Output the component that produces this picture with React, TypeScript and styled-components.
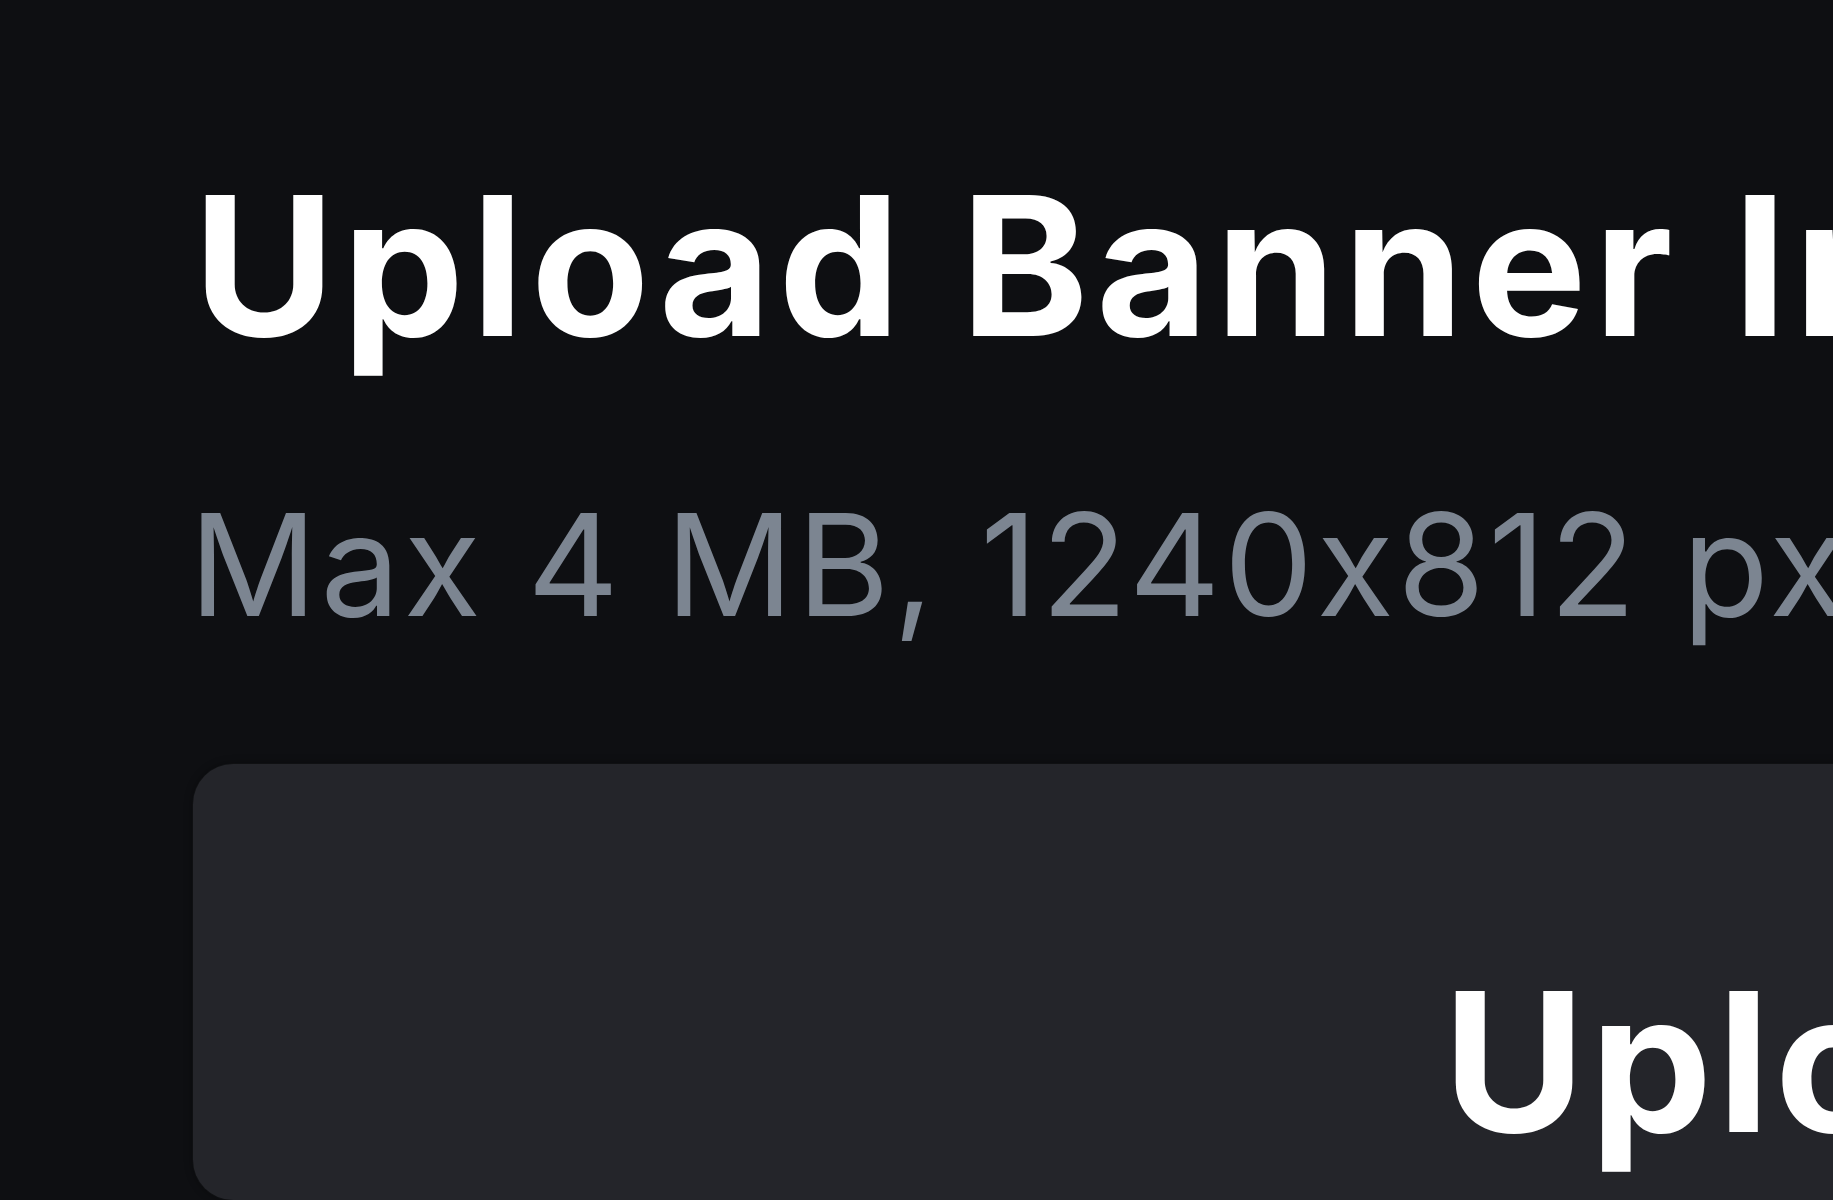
import React from 'react';
import styled, { createGlobalStyle } from 'styled-components';

const GlobalStyle = createGlobalStyle`
  html, body {
    margin: 0;
    padding: 0;
    background: #0e0f12;
    overflow: hidden;
  }
  body {
    font-family: Inter, "Noto Sans", sans-serif;
    font-feature-settings: "calt" 0;
  }
`;

const Page = styled.div`
  width: 1833px;
  height: 1200px;
  padding: 148px 0 0 193px;
  box-sizing: border-box;
  overflow: hidden;
  display: flex;
  flex-direction: column;
`;

const Title = styled.h1`
  margin: 0;
  font-size: 194px;
  font-weight: 700;
  letter-spacing: 7px;
  color: #ffffff;
  white-space: nowrap;
  line-height: normal;
`;

const Hint = styled.p`
  margin: 95px 0 0 -4px;
  font-size: 142px;
  font-weight: 400;
  letter-spacing: 3.2px;
  color: #7c8591;
  white-space: nowrap;
  line-height: normal;
`;

const DropZone = styled.div`
  margin-top: 114px;
  width: 2600px;
  height: 900px;
  background: #24252a;
  border-radius: 40px;
  box-shadow: 0 0 0 1px rgba(255, 255, 255, 0.02), 0 0 8px rgba(0, 0, 0, 0.4);
  box-sizing: border-box;
  padding: 180px 0 0 1250px;
`;

const DropLabel = styled.span`
  font-size: 194px;
  font-weight: 700;
  letter-spacing: 5px;
  color: #ffffff;
  white-space: nowrap;
  line-height: normal;
`;

export default function App() {
  return (
    <>
      <GlobalStyle />
      <Page>
        <Title>Upload Banner Image</Title>
        <Hint>Max 4 MB, 1240x812 px</Hint>
        <DropZone>
          <DropLabel>Upload</DropLabel>
        </DropZone>
      </Page>
    </>
  );
}
